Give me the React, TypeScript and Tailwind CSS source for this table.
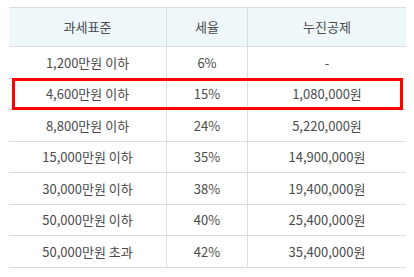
import React from "react";

const rows = [
  ["1,200만원 이하", "6%", "-"],
  ["4,600만원 이하", "15%", "1,080,000원"],
  ["8,800만원 이하", "24%", "5,220,000원"],
  ["15,000만원 이하", "35%", "14,900,000원"],
  ["30,000만원 이하", "38%", "19,400,000원"],
  ["50,000만원 이하", "40%", "25,400,000원"],
  ["50,000만원 초과", "42%", "35,400,000원"],
];

const font = { fontFamily: '"Malgun Gothic", "Noto Sans CJK KR", "Noto Sans", sans-serif' };

export default function App() {
  return (
    <div className="w-[414px] h-[277px] bg-white pt-[7px] pl-[9px]" style={font}>
      <div className="w-[397px] border-t border-[#dcdcdc] text-[13px] text-[#4a4a4a]">
        <div className="grid grid-cols-[158px_81px_158px] h-[39px] bg-[#eef7fa] border-b border-[#dcdcdc]">
          <div className="flex items-center justify-center border-r border-[#dcdcdc]">과세표준</div>
          <div className="flex items-center justify-center border-r border-[#dcdcdc]">세율</div>
          <div className="flex items-center justify-center">누진공제</div>
        </div>
        {rows.map((r, i) => (
          <div key={i} className="relative grid grid-cols-[158px_81px_158px] h-[31.5px] border-b border-[#dcdcdc]">
            <div className="flex items-center justify-center border-r border-[#dcdcdc]">{r[0]}</div>
            <div className="flex items-center justify-center border-r border-[#dcdcdc]">{r[1]}</div>
            <div className="flex items-center justify-center">{r[2]}</div>
            {i === 1 && (
              <div className="absolute left-[3px] right-[3px] top-[-1px] bottom-[-1px] border-[3px] border-[#ff0000]" />
            )}
          </div>
        ))}
      </div>
    </div>
  );
}
